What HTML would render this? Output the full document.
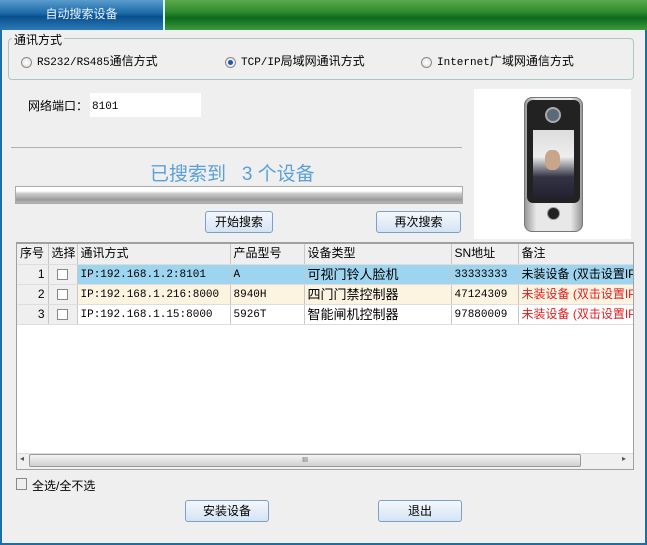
<!DOCTYPE html>
<html><head><meta charset="utf-8"><style>
*{margin:0;padding:0;box-sizing:border-box}
body{width:647px;height:545px;overflow:hidden;background:#1c6ea4;font-family:"Liberation Sans","Noto Sans CJK SC",sans-serif;font-size:12px;color:#000;position:relative}
.abs{position:absolute}
#main{left:2px;top:30px;width:643px;height:513px;background:#f0eff0}
.tab{left:0;top:0;width:163px;height:30px;background:linear-gradient(#5a9ccc,#1a69a8 45%,#0a4f8c 55%,#2b7ab8);color:#e8f2ff;font-size:12px;line-height:28px;text-align:center}
.green{left:163px;top:0;width:484px;height:30px;background:linear-gradient(#5da84c,#2e8a2e 40%,#0b6a1c 60%,#3e9a3e);border-left:2px solid #cfe;}
.grp{left:8px;top:38px;width:626px;height:42px;border:1px solid #a8c8c8;border-radius:4px}
.radio{width:11px;height:11px;border:1px solid #8a8a8a;border-radius:50%;background:radial-gradient(#fff,#ddd)}
.radio.on::after{content:"";position:absolute;left:2px;top:2px;width:5px;height:5px;border-radius:50%;background:#2256a8}
.mono{font-family:"Liberation Mono","Noto Sans CJK SC",monospace;font-size:11px;line-height:14px}
.btn{height:22px;border:1px solid #7ea0c8;border-radius:3px;background:linear-gradient(#f4f8fc,#d4e4f4);text-align:center;line-height:20px;font-size:12px}
table{border-collapse:collapse;table-layout:fixed}
td{border-right:1px solid #c8c8c8;border-bottom:1px solid #ddd;height:20px;padding:0 3px;white-space:nowrap;overflow:hidden;vertical-align:middle;line-height:19px}
td.mono span.m{position:relative;top:1px}
.cb{display:inline-block;width:11px;height:11px;border:1px solid #888;background:#fff;vertical-align:middle}
</style></head><body>
<div class="abs tab">自动搜索设备</div>
<div class="abs green"></div>
<div class="abs" id="main"></div>
<div class="abs grp"></div>
<div class="abs" style="left:12px;top:31px;background:#f0eff0;padding:0 2px;font-size:12px">通讯方式</div>
<div class="abs radio" style="left:21px;top:57px"></div>
<div class="abs mono" style="left:37px;top:55px">RS232/RS485<span style="font-size:12px">通信方式</span></div>
<div class="abs radio on" style="left:225px;top:57px"></div>
<div class="abs mono" style="left:241px;top:55px">TCP/IP<span style="font-size:12px">局域网通讯方式</span></div>
<div class="abs radio" style="left:421px;top:57px"></div>
<div class="abs mono" style="left:437px;top:55px">Internet<span style="font-size:12px">广域网通信方式</span></div>
<div class="abs" style="left:28px;top:97px">网络端口：</div>
<div class="abs" style="left:90px;top:93px;width:111px;height:24px;background:#fff"></div>
<div class="abs mono" style="left:92px;top:100px">8101</div>
<div class="abs" style="left:11px;top:147px;width:451px;height:1px;background:#b0b0b0"></div>
<div class="abs" style="left:150px;top:159px;font-size:19px;color:#5aa0dc">已搜索到&nbsp;&nbsp;&nbsp;3 个设备</div>
<div class="abs" style="left:15px;top:186px;width:448px;height:18px;border:1px solid #aaa;background:linear-gradient(#fff 0,#fff 25%,#ccc 40%,#9a9a9a 80%,#b8b8b8)"></div>
<div class="abs btn" style="left:205px;top:211px;width:68px">开始搜索</div>
<div class="abs btn" style="left:376px;top:211px;width:85px">再次搜索</div>
<div class="abs" style="left:474px;top:89px;width:157px;height:150px;background:#fff"></div>
<div class="abs" style="left:524px;top:97px;width:59px;height:135px;border-radius:8px;background:linear-gradient(90deg,#999,#e8e8e8 20%,#e8e8e8 80%,#999);border:1px solid #777"></div>
<div class="abs" style="left:527px;top:100px;width:53px;height:103px;border-radius:6px;background:#222"></div>
<div class="abs" style="left:545px;top:107px;width:16px;height:16px;border-radius:50%;background:#5a6a7a;border:2px solid #aaa"></div>
<div class="abs" style="left:533px;top:130px;width:41px;height:67px;background:linear-gradient(#ddd,#eee 40%,#334 70%,#223)"></div>
<div class="abs" style="left:545px;top:150px;width:15px;height:20px;border-radius:40%;background:#c9a58c"></div>
<div class="abs" style="left:547px;top:207px;width:13px;height:13px;border-radius:50%;background:#222;border:1px solid #999"></div>
<div class="abs" style="left:16px;top:242px;width:618px;height:228px;background:#fff;border:1px solid #a0a0a0;border-top:2px solid #a0a0a0;overflow:hidden">
<table style="width:640px">
<colgroup><col style="width:31px"><col style="width:29px"><col style="width:153px"><col style="width:74px"><col style="width:147px"><col style="width:67px"><col style="width:139px"></colgroup>
<tr style="background:#f0eff0;font-size:12px"><td>序号</td><td>选择</td><td>通讯方式</td><td>产品型号</td><td>设备类型</td><td>SN地址</td><td>备注</td></tr>
<tr><td style="background:#f0eff0;text-align:right">1</td><td style="background:#f0eff0;text-align:center"><span class="cb"></span></td><td class="mono" style="background:#9dd5f0"><span class="m">IP:192.168.1.2:8101</span></td><td class="mono" style="background:#9dd5f0"><span class="m">A</span></td><td style="background:#9dd5f0;font-size:13px">可视门铃人脸机</td><td class="mono" style="background:#9dd5f0"><span class="m">33333333</span></td><td style="background:#9dd5f0">未装设备 (双击设置IP</td></tr>
<tr><td style="background:#f0eff0;text-align:right">2</td><td style="background:#f0eff0;text-align:center"><span class="cb"></span></td><td class="mono" style="background:#fdf3e1"><span class="m">IP:192.168.1.216:8000</span></td><td class="mono" style="background:#fdf3e1"><span class="m">8940H</span></td><td style="background:#fdf3e1;font-size:13px">四门门禁控制器</td><td class="mono" style="background:#fdf3e1"><span class="m">47124309</span></td><td style="background:#fdf3e1;color:#e02020">未装设备 (双击设置IP</td></tr>
<tr><td style="background:#f0eff0;text-align:right">3</td><td style="background:#f0eff0;text-align:center"><span class="cb"></span></td><td class="mono"><span class="m">IP:192.168.1.15:8000</span></td><td class="mono"><span class="m">5926T</span></td><td style="font-size:13px">智能闸机控制器</td><td class="mono"><span class="m">97880009</span></td><td style="color:#e02020">未装设备 (双击设置IP</td></tr>
</table></div>
<div class="abs" style="left:17px;top:453px;width:616px;height:16px;background:#f0f0f0;border-top:1px solid #ddd"></div>
<div class="abs" style="left:20px;top:454px;font-size:8px;color:#555">◂</div>
<div class="abs" style="left:622px;top:454px;font-size:8px;color:#555">▸</div>
<div class="abs" style="left:29px;top:454px;width:552px;height:13px;border:1px solid #999;border-radius:2px;background:linear-gradient(#f4f4f4,#d0d0d0);text-align:center;font-size:7px;line-height:11px;color:#555">III</div>
<div class="abs cb" style="left:16px;top:478px;width:11px;height:12px;background:#eee"></div>
<div class="abs" style="left:32px;top:477px">全选/全不选</div>
<div class="abs btn" style="left:185px;top:500px;width:84px">安装设备</div>
<div class="abs btn" style="left:378px;top:500px;width:84px">退出</div>
</body></html>
